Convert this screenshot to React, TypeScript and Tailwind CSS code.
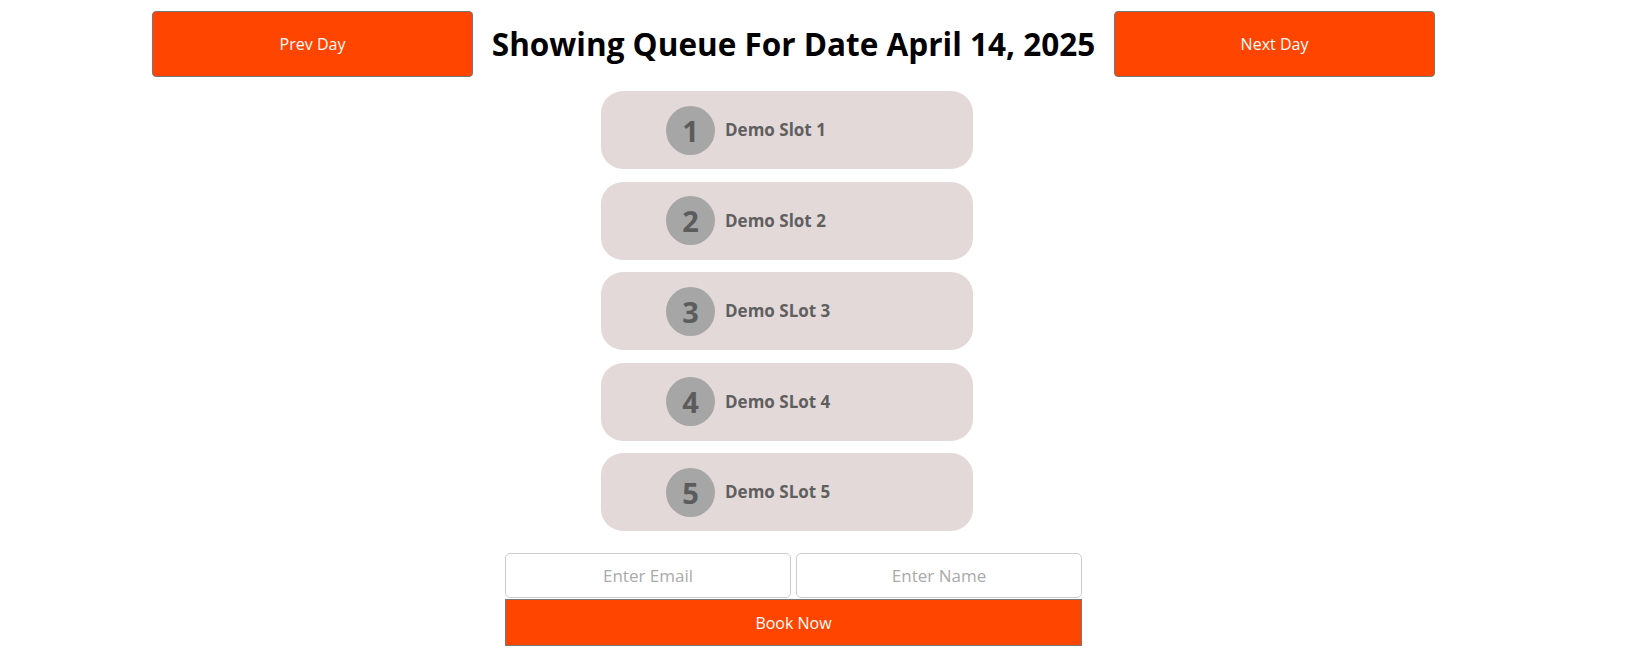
import React from 'react';

const slots = [
  { id: 1, name: 'Demo Slot 1' },
  { id: 2, name: 'Demo Slot 2' },
  { id: 3, name: 'Demo SLot 3' },
  { id: 4, name: 'Demo SLot 4' },
  { id: 5, name: 'Demo SLot 5' },
];

const SlotCard = ({ id, name }: { id: number; name: string }) => (
  <div className="w-[372px] h-[78px] rounded-[22px] bg-[#e3d9d9] flex items-center pl-[65px] gap-[10px]">
    <div className="w-[49px] h-[49px] rounded-full bg-[#a6a6a6] flex items-center justify-center text-[29px] font-bold text-[#5c5c5c] leading-none">
      {id}
    </div>
    <span className="text-[17px] font-bold text-[#5f5f5f]">{name}</span>
  </div>
);

export default function App() {
  return (
    <div
      className="w-[1631px] h-[652px] bg-white pt-[11px] pl-[152px]"
      style={{ fontFamily: '"Open Sans", "Liberation Sans", sans-serif' }}
    >
      <div className="w-[1283px] flex items-center">
        <button className="w-[321px] h-[66px] rounded bg-[#ff4500] border border-[#777777] text-white text-[16px]">
          Prev Day
        </button>
        <h1 className="flex-1 text-center text-[31.5px] font-bold text-black whitespace-nowrap">
          Showing Queue For Date April 14, 2025
        </h1>
        <button className="w-[321px] h-[66px] rounded bg-[#ff4500] border border-[#777777] text-white text-[16px]">
          Next Day
        </button>
      </div>

      <div className="flex flex-col gap-[12.5px] mt-[14px] ml-[449px]">
        {slots.map((s) => (
          <SlotCard key={s.id} id={s.id} name={s.name} />
        ))}
      </div>

      <div className="ml-[353px] mt-[22px] w-[577px] flex flex-col">
        <div className="flex gap-[5px]">
          <input
            placeholder="Enter Email"
            className="w-[286px] h-[45px] rounded-[5px] border border-[#cccccc] text-center text-[17px] placeholder:text-[#aaaaaa] outline-none"
          />
          <input
            placeholder="Enter Name"
            className="flex-1 h-[45px] rounded-[5px] border border-[#cccccc] text-center text-[17px] placeholder:text-[#aaaaaa] outline-none"
          />
        </div>
        <button className="mt-px h-[47px] bg-[#ff4500] border border-[#777777] text-white text-[16px]">
          Book Now
        </button>
      </div>
    </div>
  );
}
